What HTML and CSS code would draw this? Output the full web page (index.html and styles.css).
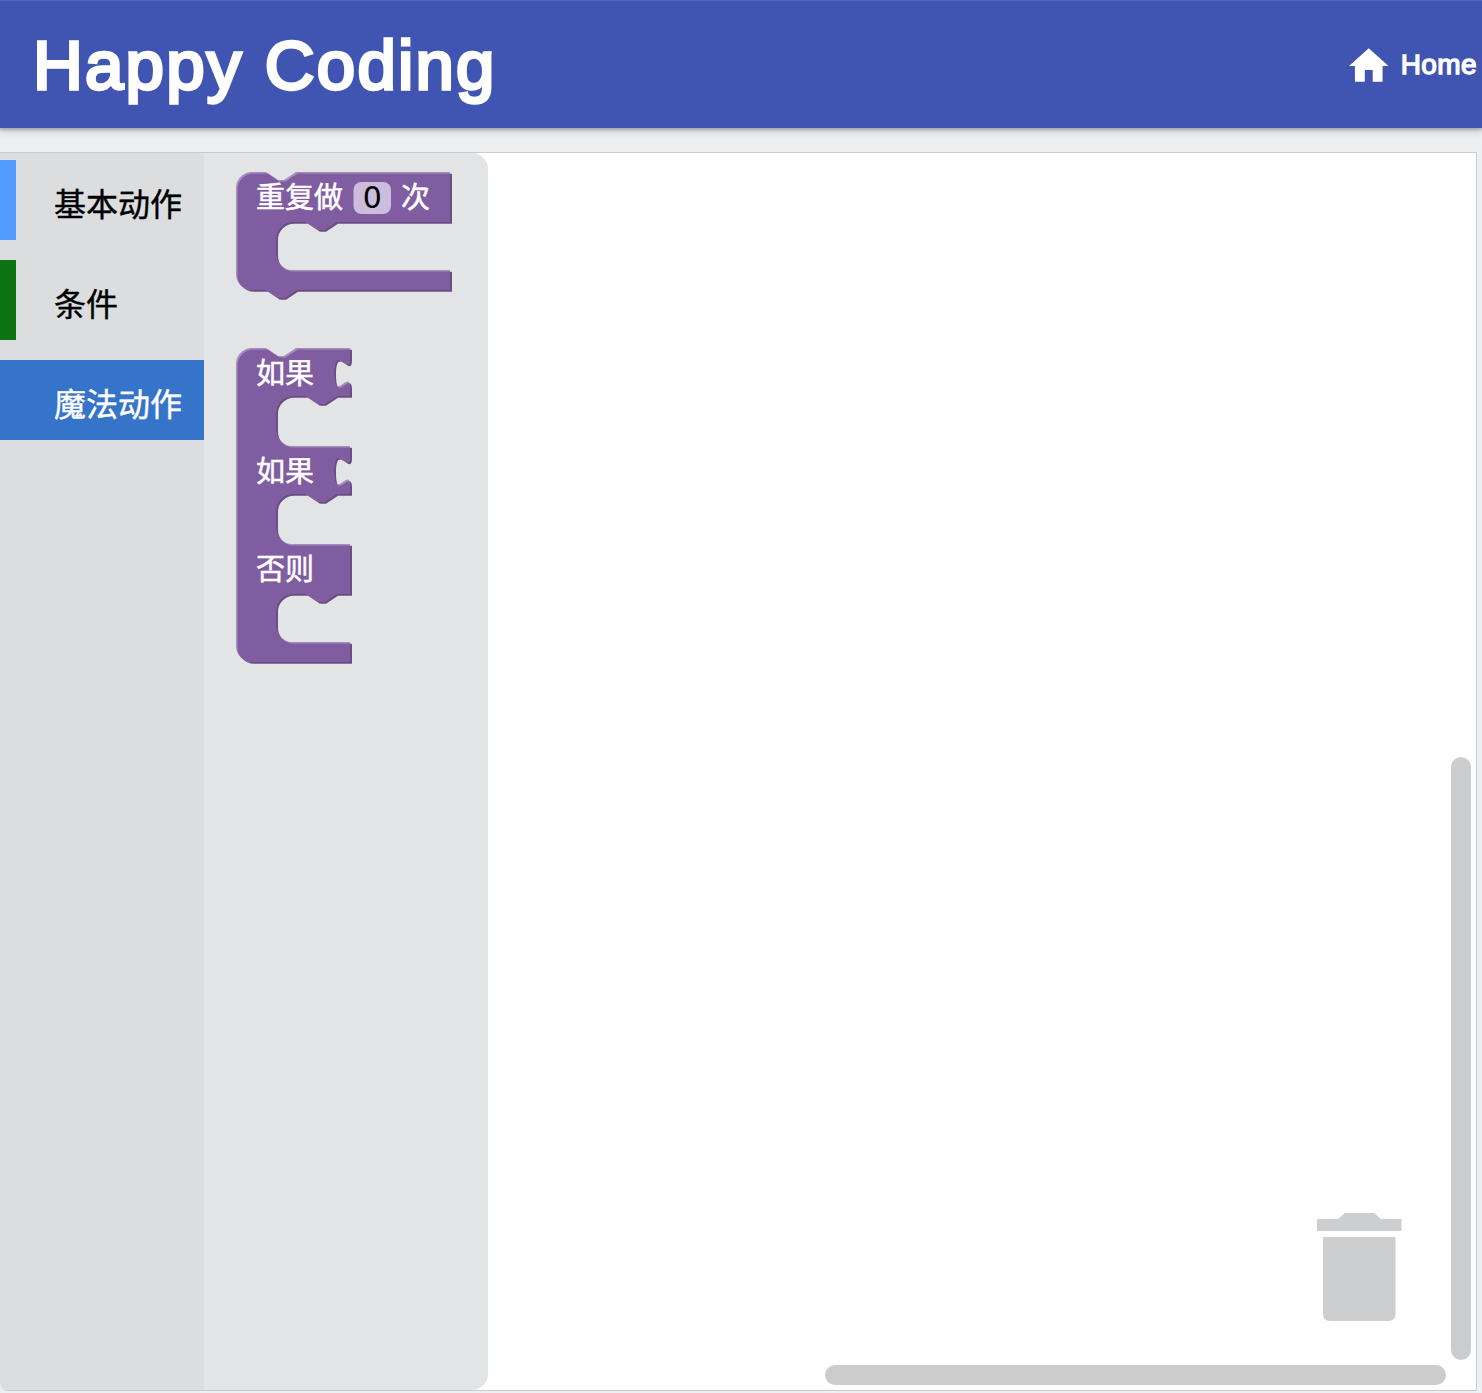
FILE: index.html
```html
<!DOCTYPE html>
<html lang="zh-CN">
<head>
<meta charset="utf-8">
<title>Happy Coding</title>
<link rel="stylesheet" href="styles.css">
</head>
<body>
<header class="topbar">
  <h1 class="brand">Happy Coding</h1>
  <a class="home" href="#">
    <svg class="home-icon" viewBox="2 3 20 17" width="39.500" height="34" aria-hidden="true"><path d="M10 20v-6h4v6h5v-8h3L12 3 2 12h3v8z"/></svg>
    <span class="home-label">Home</span>
  </a>
</header>
<main class="editor">
  <nav class="toolbox">
    <div class="category category-basic">基本动作</div>
    <div class="category category-condition">条件</div>
    <div class="category category-magic">魔法动作</div>
  </nav>
  <section class="flyout">
    <svg class="block" width="218" height="130" viewBox="0 0 218 130">
      <defs>
        <path id="repeat" d="M0 16a16 16 0 0 1 16-16H30l12 8h6l12-8H214V50H100l-12 8h-6l-12-8H56a16 16 0 0 0-16 16V82a16 16 0 0 0 16 16H214V118H60l-12 8h-6l-12-8H16a16 16 0 0 1-16-16z"/>
        <clipPath id="repeat-clip"><use href="#repeat"/></clipPath>
      </defs>
      <use class="shade" href="#repeat" x="2" y="1.800"/>
      <use class="light" href="#repeat"/>
      <g clip-path="url(#repeat-clip)"><use class="fill" href="#repeat" x="1.500" y="1.500"/></g>
      <text class="label" x="20" y="36">重复做</text>
      <rect class="field" x="117.500" y="10" width="37.500" height="32" rx="8"/>
      <text class="field-text" x="136.300" y="35.500">0</text>
      <text class="label" x="165" y="36">次</text>
    </svg>
    <svg class="block" width="118" height="318" viewBox="0 0 118 318">
      <defs>
        <path id="branch" d="M0 16a16 16 0 0 1 16-16H30l12 8h6l12-8H114v10c0 20-16-16-16 15s16-5 16 15V48H100l-12 8h-6l-12-8H56a16 16 0 0 0-16 16V82a16 16 0 0 0 16 16H114v10c0 20-16-16-16 15s16-5 16 15V146H100l-12 8h-6l-12-8H56a16 16 0 0 0-16 16V180a16 16 0 0 0 16 16H114V246H100l-12 8h-6l-12-8H56a16 16 0 0 0-16 16V278a16 16 0 0 0 16 16H114V314H16a16 16 0 0 1-16-16z"/>
        <clipPath id="branch-clip"><use href="#branch"/></clipPath>
      </defs>
      <use class="shade" href="#branch" x="2" y="1.800"/>
      <use class="light" href="#branch"/>
      <g clip-path="url(#branch-clip)"><use class="fill" href="#branch" x="1.500" y="1.500"/></g>
      <text class="label" x="20" y="36">如果</text>
      <text class="label" x="20" y="134">如果</text>
      <text class="label" x="20" y="232">否则</text>
    </svg>
  </section>
  <section class="workspace">
    <div class="canvas">
      <svg class="trash" width="86" height="110" viewBox="0 0 86 110" aria-label="Trash"><path d="M0 6H21L28 0H57L64 6H84.500V18H0zM6 24H78.500V101q0 7-7 7H13q-7 0-7-7z"/></svg>
    </div>
    <div class="track-v"><div class="thumb-v"></div></div>
    <div class="track-h"><div class="thumb-h"></div></div>
  </section>
</main>
</body>
</html>
```
FILE: styles.css
```css
* { box-sizing: border-box; }
body {
  margin: 0;
  height: 1393px;
  overflow: hidden;
  background: #eeeff0;
  font-family: "Liberation Sans", "Noto Sans CJK SC", sans-serif;
}
.topbar {
  display: flex;
  align-items: center;
  justify-content: space-between;
  height: 128px;
  padding: 0 5px 0 33px;
  background: #4054b2;
  border-top: 1px solid #5266bb;
  box-shadow: 0 1px 3px 1px rgba(0, 0, 0, .22), 0 4px 7px rgba(0, 0, 0, .13);
  color: #fff;
}
.brand {
  margin: 2px 0 0;
  font-size: 69px;
  font-weight: 400;
  line-height: 80px;
  letter-spacing: 2.2px;
  -webkit-text-stroke: 3.3px #fff;
}
.home {
  display: flex;
  align-items: center;
  gap: 12px;
  color: #fff;
  text-decoration: none;
}
.home-icon { fill: #fff; margin-top: 1px; }
.home-label {
  font-size: 28px;
  line-height: 32px;
  letter-spacing: .4px;
  -webkit-text-stroke: 1.4px #fff;
}
.editor {
  display: grid;
  grid-template-columns: 204px 284px 1fr;
  width: 1477px;
  height: 1239px;
  margin-top: 24px;
  border: solid #c9cacb;
  border-width: 1px 1px 1px 0;
  border-bottom-left-radius: 8px;
  background: #fff;
  overflow: hidden;
}
.toolbox {
  display: flex;
  flex-direction: column;
  gap: 20px;
  padding-top: 7px;
  background: #dbdddf;
}
.category {
  height: 80px;
  padding-left: 38px;
  border-left: 16px solid;
  font: 32px/85px "Noto Sans CJK SC", sans-serif;
  -webkit-text-stroke: .4px;
}
.category-basic { border-color: #519bff; }
.category-condition { border-color: #0c7212; }
.category-magic { border-color: #3674c9; background: #3674c9; color: #fff; }
.flyout {
  display: flex;
  flex-direction: column;
  align-items: flex-start;
  gap: 46px;
  padding: 19px 0 0 32px;
  background: #e2e4e5;
  border-radius: 0 16px 16px 0;
}
.block { display: block; }
.fill { fill: #805ca1; }
.light { fill: #a58dbe; }
.shade { fill: #6b4d86; }
.label {
  fill: #fff;
  stroke: #fff;
  stroke-width: .5px;
  font: 29px "Noto Sans CJK SC", sans-serif;
}
.field { fill: #cbbddb; }
.field-text {
  font: 30px "DejaVu Sans", sans-serif;
  text-anchor: middle;
}
.workspace {
  display: grid;
  grid-template-columns: 1fr 20px;
  grid-template-rows: 1fr 20px;
  gap: 5px;
  padding: 0 5px 5px 0;
}
.canvas {
  display: flex;
  align-items: flex-end;
  justify-content: flex-end;
  padding: 0 43px 37px 0;
}
.trash { fill: #cdced0; }
.track-v { display: flex; align-items: flex-end; }
.thumb-v { width: 20px; height: 603px; border-radius: 10px; background: #cacccd; }
.track-h { display: flex; justify-content: flex-end; }
.thumb-h { width: 621px; height: 20px; border-radius: 10px; background: #cacccd; }
```
